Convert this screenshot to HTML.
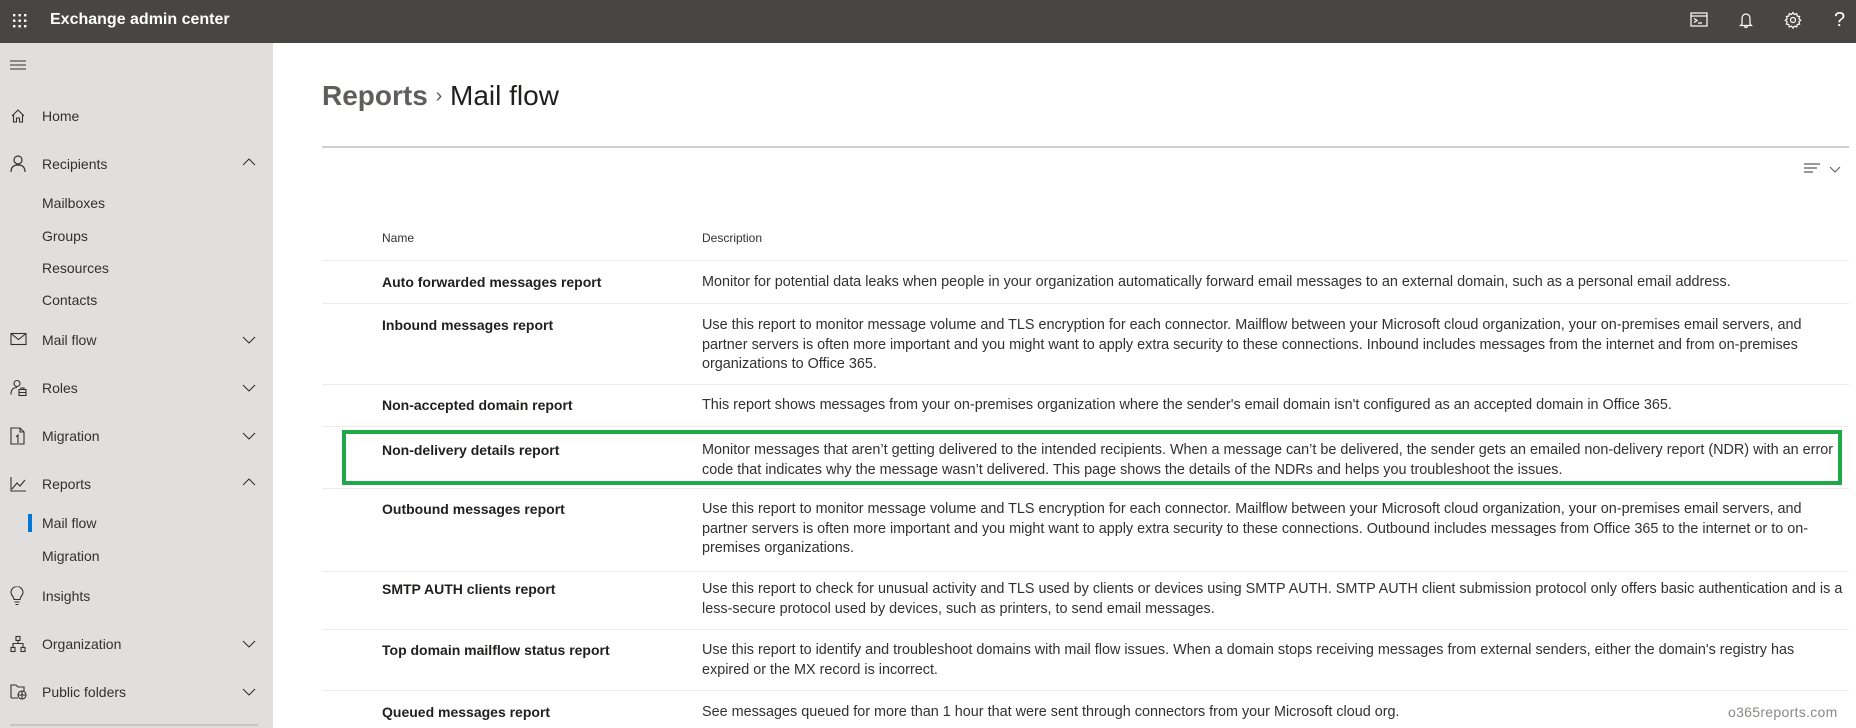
<!DOCTYPE html>
<html><head><meta charset="utf-8"><style>
*{margin:0;padding:0;box-sizing:border-box}
body{width:1856px;height:728px;overflow:hidden;font-family:"Liberation Sans",sans-serif;background:#fff;position:relative;color:#323130}
.top{position:absolute;left:0;top:0;width:1856px;height:43px;background:#484644}
.title{position:absolute;left:50px;top:11px;color:#fff;font-weight:bold;font-size:16px}
.side{position:absolute;left:0;top:43px;width:273px;height:685px;background:#e1dfdd}
.nav{position:absolute;left:42px;font-size:14px;color:#323130;transform:translateY(-50%)}
.ic{position:absolute;left:10px;transform:translateY(-50%)}
.chev{position:absolute;left:242px;transform:translateY(-50%)}
.t{position:absolute;font-size:14.4px;line-height:19.7px;white-space:nowrap}
.n{left:382px;font-weight:bold;color:#201f1e;font-size:14px}
.d{left:702px;color:#323130}
.hl{position:absolute;left:322px;width:1527px;height:1px;background:#edebe9}
</style></head><body>
<div class="top">
<svg style="position:absolute;left:12px;top:13px" width="16" height="16" fill="#fff"><g><rect x="1" y="1" width="2.4" height="2.4"/><rect x="6.5" y="1" width="2.4" height="2.4"/><rect x="12" y="1" width="2.4" height="2.4"/><rect x="1" y="6.5" width="2.4" height="2.4"/><rect x="6.5" y="6.5" width="2.4" height="2.4"/><rect x="12" y="6.5" width="2.4" height="2.4"/><rect x="1" y="12" width="2.4" height="2.4"/><rect x="6.5" y="12" width="2.4" height="2.4"/><rect x="12" y="12" width="2.4" height="2.4"/></g></svg>
<div class="title">Exchange admin center</div>
<svg style="position:absolute;left:1690px;top:12px" width="18" height="16" fill="none" stroke="#fff" stroke-width="1.2"><rect x="1" y="1" width="16" height="13"/><line x1="1" y1="4" x2="17" y2="4"/><path d="M4 6.5l3 2-3 2M8 11h4"/></svg>
<svg style="position:absolute;left:1738px;top:11px" width="16" height="18" fill="none" stroke="#fff" stroke-width="1.2"><path d="M4 13V7a4 4 0 018 0v6l1.5 1.5h-11zM6.5 15a1.5 1.5 0 003 0"/></svg>
<svg style="position:absolute;left:1784px;top:11px" width="18" height="18" fill="none" stroke="#fff" stroke-width="1.2"><circle cx="9" cy="9" r="2.5"/><path d="M9 1.5l1.5 2 2.3-.8.4 2.4 2.4.4-.8 2.3 2 1.5-2 1.5.8 2.3-2.4.4-.4 2.4-2.3-.8-1.5 2-1.5-2-2.3.8-.4-2.4-2.4-.4.8-2.3-2-1.5 2-1.5-.8-2.3 2.4-.4.4-2.4 2.3.8z"/></svg>
<div style="position:absolute;left:1834px;top:9px;color:#fff;font-size:20px">?</div>
</div>
<div class="side">
<svg style="position:absolute;left:10px;top:16px" width="16" height="12" stroke="#323130" stroke-width="1.1"><path d="M0 2h16M0 6h16M0 10h16"/></svg>
</div>
<svg class="ic" style="top:116px" width="16" height="16" fill="none" stroke="#323130" stroke-width="1.1"><path d="M2 8l6-6 6 6M3.5 6.5V14h3v-4h3v4h3V6.5"/></svg>
<div class="nav" style="top:116px">Home</div>
<svg class="ic" style="top:164px" width="16" height="18" fill="none" stroke="#323130" stroke-width="1.2"><circle cx="8" cy="5" r="4"/><path d="M1 17c0-5 3-7 7-7s7 2 7 7"/></svg>
<div class="nav" style="top:164px">Recipients</div>
<svg class="chev" style="top:162px" width="14" height="8" fill="none" stroke="#323130" stroke-width="1.1"><path d="M1 7l6-6 6 6"/></svg>
<div class="nav" style="top:203px">Mailboxes</div>
<div class="nav" style="top:236px">Groups</div>
<div class="nav" style="top:268px">Resources</div>
<div class="nav" style="top:300px">Contacts</div>
<svg class="ic" style="top:339px" width="17" height="13" fill="none" stroke="#323130" stroke-width="1.1"><rect x="1" y="1" width="15" height="11"/><path d="M1 1l7.5 6 7.5-6"/></svg>
<div class="nav" style="top:340px">Mail flow</div>
<svg class="chev" style="top:340px" width="14" height="8" fill="none" stroke="#323130" stroke-width="1.1"><path d="M1 1l6 6 6-6"/></svg>
<svg class="ic" style="top:388px" width="17" height="17" fill="none" stroke="#323130" stroke-width="1.1"><circle cx="7" cy="4" r="3"/><path d="M1 15c0-5 2-7 6-7"/><rect x="9" y="10" width="7" height="6"/><path d="M11 10V8.5h3V10M9 13h7"/></svg>
<div class="nav" style="top:388px">Roles</div>
<svg class="chev" style="top:388px" width="14" height="8" fill="none" stroke="#323130" stroke-width="1.1"><path d="M1 1l6 6 6-6"/></svg>
<svg class="ic" style="top:436px" width="15" height="18" fill="none" stroke="#323130" stroke-width="1.1"><path d="M1 1h9l4 4v12H1zM10 1v4h4M8 16V8l-2 2"/></svg>
<div class="nav" style="top:436px">Migration</div>
<svg class="chev" style="top:436px" width="14" height="8" fill="none" stroke="#323130" stroke-width="1.1"><path d="M1 1l6 6 6-6"/></svg>
<svg class="ic" style="top:484px" width="17" height="16" fill="none" stroke="#323130" stroke-width="1.1"><path d="M1 1v14h15M2 13l5-6 3 3 5-6"/></svg>
<div class="nav" style="top:484px">Reports</div>
<svg class="chev" style="top:482px" width="14" height="8" fill="none" stroke="#323130" stroke-width="1.1"><path d="M1 7l6-6 6 6"/></svg>
<div style="position:absolute;left:28px;top:514px;width:4px;height:18px;background:#0078d4"></div>
<div class="nav" style="top:523px">Mail flow</div>
<div class="nav" style="top:556px">Migration</div>
<svg class="ic" style="top:596px" width="14" height="19" fill="none" stroke="#323130" stroke-width="1.1"><path d="M4 13c0-3-3-4-3-7a6 6 0 0112 0c0 3-3 4-3 7zM4.5 15.5h5M5.5 18h3"/></svg>
<div class="nav" style="top:596px">Insights</div>
<svg class="ic" style="top:644px" width="16" height="17" fill="none" stroke="#323130" stroke-width="1.1"><rect x="6" y="1" width="4" height="4"/><rect x="1" y="12" width="4" height="4"/><rect x="11" y="12" width="4" height="4"/><path d="M8 5v3M3 12V8h10v4"/></svg>
<div class="nav" style="top:644px">Organization</div>
<svg class="chev" style="top:644px" width="14" height="8" fill="none" stroke="#323130" stroke-width="1.1"><path d="M1 1l6 6 6-6"/></svg>
<svg class="ic" style="top:692px" width="17" height="16" fill="none" stroke="#323130" stroke-width="1.1"><path d="M1 14V1h5l2 2h6v4M1 14h7"/><circle cx="12" cy="11" r="4"/><path d="M8 11h8M12 7v8"/></svg>
<div class="nav" style="top:692px">Public folders</div>
<svg class="chev" style="top:692px" width="14" height="8" fill="none" stroke="#323130" stroke-width="1.1"><path d="M1 1l6 6 6-6"/></svg>
<div style="position:absolute;left:10px;top:724px;width:248px;height:2px;background:#c8c6c4"></div>

<div style="position:absolute;left:322px;top:80px;font-size:28px;font-weight:bold;color:#605e5c;white-space:nowrap">Reports <span style="font-weight:normal;font-size:20px;position:relative;top:-3px">›</span> <span style="color:#201f1e;font-weight:normal">Mail flow</span></div>
<div style="position:absolute;left:322px;top:146px;width:1527px;height:2px;background:#d2d0ce"></div>
<svg style="position:absolute;left:1804px;top:163px" width="18" height="12" stroke="#323130" stroke-width="1.1"><path d="M0 1h16M0 5h13M0 9h9"/></svg>
<svg style="position:absolute;left:1829px;top:166px" width="12" height="7" fill="none" stroke="#605e5c" stroke-width="1.1"><path d="M1 1l5 5 5-5"/></svg>

<div class="t" style="left:382px;top:229px;font-size:12px">Name</div>
<div class="t" style="left:702px;top:229px;font-size:12px">Description</div>
<div class="hl" style="top:260px"></div>

<div class="t n" style="top:273px">Auto forwarded messages report</div>
<div class="t d" style="top:273px">Monitor for potential data leaks when people in your organization automatically forward email messages to an external domain, such as a personal email address.</div>
<div class="hl" style="top:303px"></div>

<div class="t n" style="top:316px">Inbound messages report</div>
<div class="t d" style="top:316px">Use this report to monitor message volume and TLS encryption for each connector. Mailflow between your Microsoft cloud organization, your on-premises email servers, and<br>partner servers is often more important and you might want to apply extra security to these connections. Inbound includes messages from the internet and from on-premises<br>organizations to Office 365.</div>
<div class="hl" style="top:384px"></div>

<div class="t n" style="top:396px">Non-accepted domain report</div>
<div class="t d" style="top:396px">This report shows messages from your on-premises organization where the sender's email domain isn't configured as an accepted domain in Office 365.</div>
<div class="hl" style="top:426px"></div>

<div style="position:absolute;left:342px;top:430px;width:1500px;height:55px;border:4px solid #21a84a"></div>
<div class="t n" style="top:441px">Non-delivery details report</div>
<div class="t d" style="top:441px">Monitor messages that aren’t getting delivered to the intended recipients. When a message can’t be delivered, the sender gets an emailed non-delivery report (NDR) with an error<br>code that indicates why the message wasn’t delivered. This page shows the details of the NDRs and helps you troubleshoot the issues.</div>
<div class="hl" style="top:488px"></div>

<div class="t n" style="top:500px">Outbound messages report</div>
<div class="t d" style="top:500px">Use this report to monitor message volume and TLS encryption for each connector. Mailflow between your Microsoft cloud organization, your on-premises email servers, and<br>partner servers is often more important and you might want to apply extra security to these connections. Outbound includes messages from Office 365 to the internet or to on-<br>premises organizations.</div>
<div class="hl" style="top:571px"></div>

<div class="t n" style="top:580px">SMTP AUTH clients report</div>
<div class="t d" style="top:580px">Use this report to check for unusual activity and TLS used by clients or devices using SMTP AUTH. SMTP AUTH client submission protocol only offers basic authentication and is a<br>less-secure protocol used by devices, such as printers, to send email messages.</div>
<div class="hl" style="top:629px"></div>

<div class="t n" style="top:641px">Top domain mailflow status report</div>
<div class="t d" style="top:641px">Use this report to identify and troubleshoot domains with mail flow issues. When a domain stops receiving messages from external senders, either the domain's registry has<br>expired or the MX record is incorrect.</div>
<div class="hl" style="top:690px"></div>

<div class="t n" style="top:703px">Queued messages report</div>
<div class="t d" style="top:703px">See messages queued for more than 1 hour that were sent through connectors from your Microsoft cloud org.</div>

<div style="position:absolute;left:1728px;top:704px;font-size:14px;color:#8a8886;letter-spacing:0.3px">o365reports.com</div>
</body></html>
